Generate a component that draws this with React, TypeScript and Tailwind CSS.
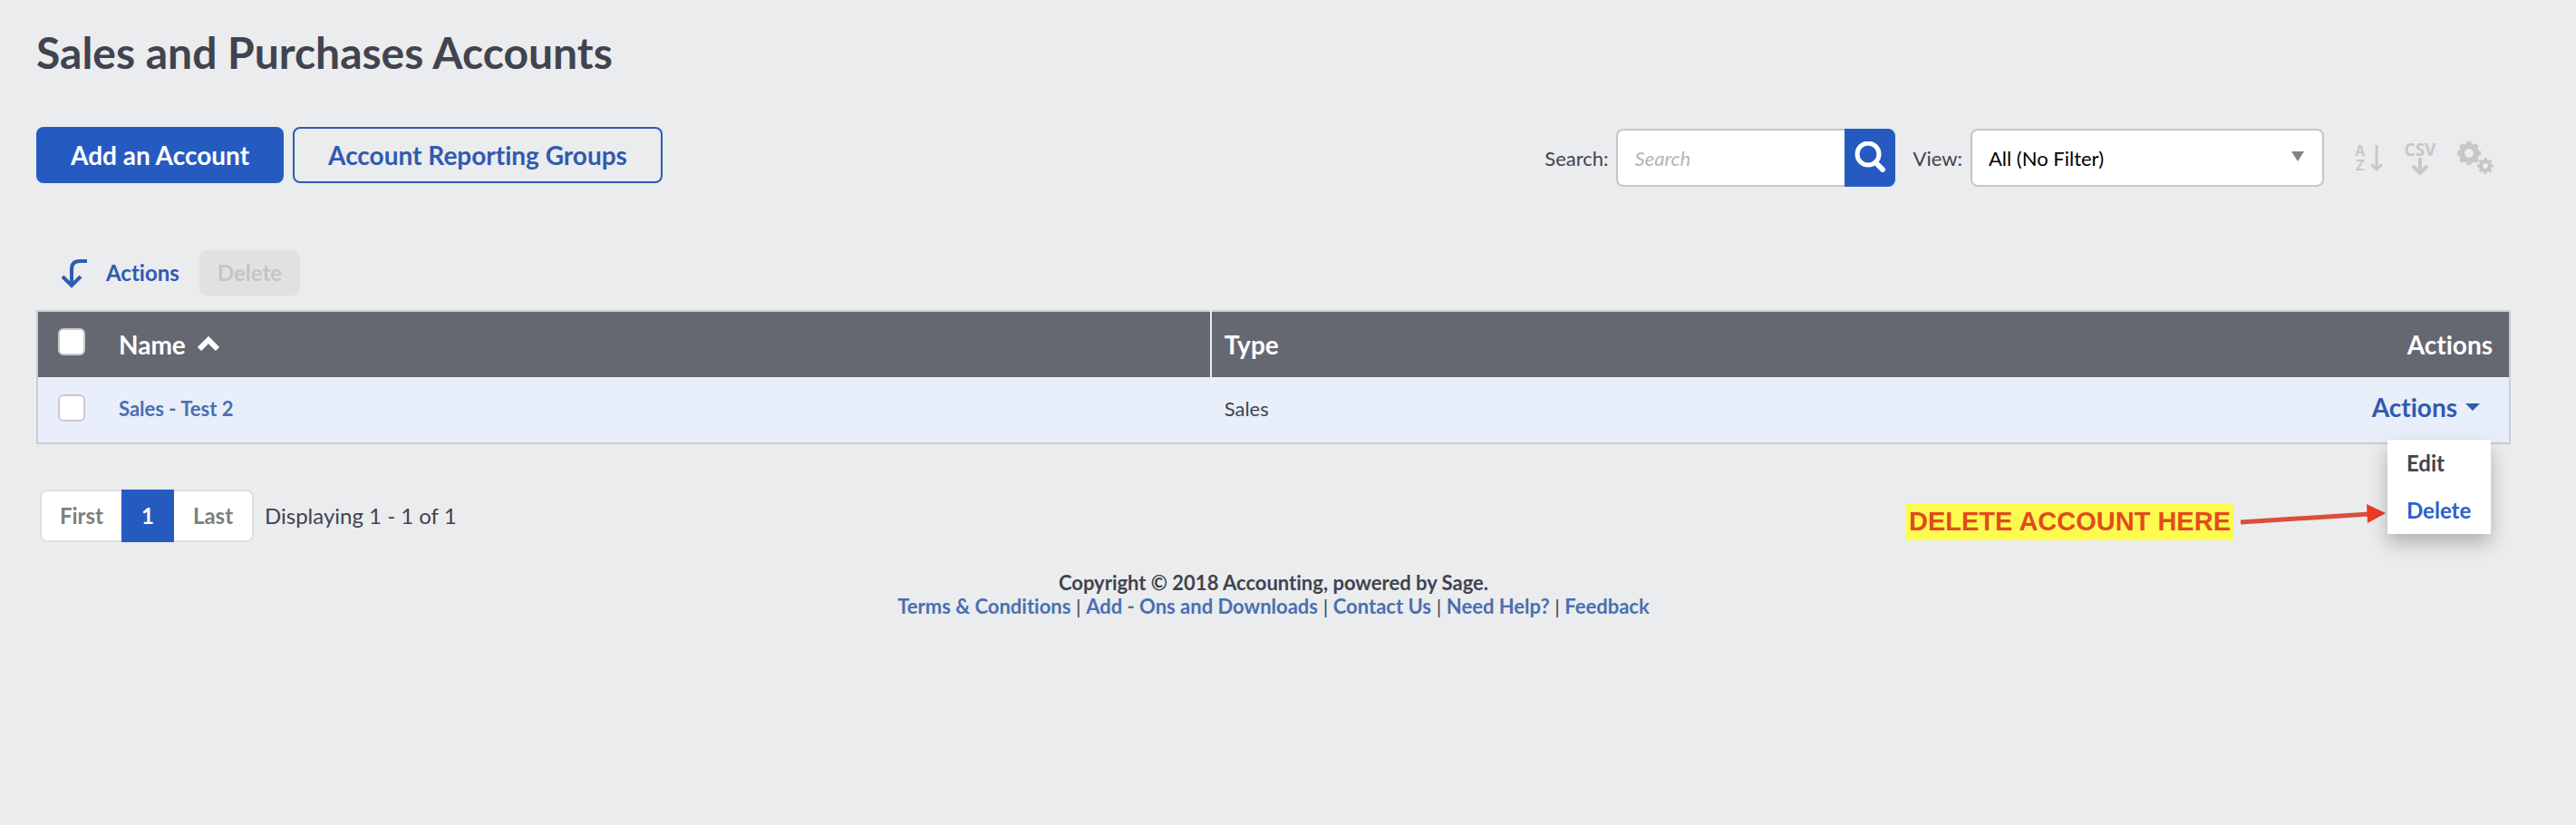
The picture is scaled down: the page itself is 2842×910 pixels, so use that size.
import { useState } from "react";

const footerLinks = ["Terms & Conditions", "Add - Ons and Downloads", "Contact Us", "Need Help?", "Feedback"];

const accounts = [{ id: 1, name: "Sales - Test 2", type: "Sales" }];

const SearchIcon = () => (
  <svg width="36" height="36" viewBox="0 0 36 36" fill="none" stroke="currentColor" strokeLinecap="round" aria-hidden="true">
    <circle cx="16" cy="14" r="12" strokeWidth="5" />
    <path d="M25 24l7 7" strokeWidth="6" />
  </svg>
);

const SortIcon = () => (
  <svg width="32" height="36" viewBox="0 0 32 36" aria-hidden="true">
    <text x="0" y="16" fontSize="16" fontWeight="700" fontFamily="Liberation Sans, sans-serif" fill="currentColor">A</text>
    <text x="1" y="32" fontSize="16" fontWeight="700" fontFamily="Liberation Sans, sans-serif" fill="currentColor">Z</text>
    <path d="M24 4v27M18 25l6 6 6-6" fill="none" stroke="currentColor" strokeWidth="3" />
  </svg>
);

const CsvIcon = () => (
  <svg width="40" height="44" viewBox="0 0 40 44" aria-hidden="true">
    <text x="20" y="20" textAnchor="middle" fontSize="19" fontWeight="700" fontFamily="Liberation Sans Narrow, Open Sans, sans-serif" fill="currentColor">CSV</text>
    <path d="M20 22v17M12 31l8 8 8-8" fill="none" stroke="currentColor" strokeWidth="4" />
  </svg>
);

const teeth = [0, 45, 90, 135, 180, 225, 270, 315];

const GearsIcon = () => (
  <svg width="42" height="40" viewBox="0 0 42 40" fill="none" stroke="currentColor" aria-hidden="true">
    <circle cx="14" cy="15" r="8" strokeWidth="6" />
    {teeth.map((angle) => (
      <path key={angle} d="M14 5V2" strokeWidth="5" transform={`rotate(${angle} 14 15)`} />
    ))}
    <circle cx="32" cy="29" r="5" strokeWidth="4" />
    {teeth.map((angle) => (
      <path key={angle} d="M32 23v-3" strokeWidth="3" transform={`rotate(${angle} 32 29)`} />
    ))}
  </svg>
);

const Checkbox = ({ label }: { label: string }) => (
  <input
    type="checkbox"
    aria-label={label}
    className="block size-[30px] appearance-none rounded-md border-2 border-[#c8cacd] bg-white checked:bg-[#255bc7]"
  />
);

const Toolbar = () => (
  <div className="flex items-start justify-between">
    <div className="flex gap-[10px] text-[28px] leading-8 font-bold">
      <button className="h-[62px] rounded-lg bg-[#255bc1] px-[38px] text-white">Add an Account</button>
      <button className="h-[62px] rounded-lg border-2 border-[#2f5bb0] px-[37px] text-[#2f5bb0]">
        Account Reporting Groups
      </button>
    </div>

    <div className="mt-0.5 mr-[18px] flex items-center text-[22px]">
      <label htmlFor="search" className="mr-2">Search:</label>
      <div className="flex h-16">
        <input
          id="search"
          type="text"
          placeholder="Search"
          className="w-[252px] rounded-l-lg border-2 border-r-0 border-[#c4c6c8] bg-white px-[19px] placeholder:text-[#b5b5b5] placeholder:italic"
        />
        <button aria-label="Run search" className="flex w-14 items-center justify-center rounded-r-lg bg-[#255bc1] text-white">
          <SearchIcon />
        </button>
      </div>
      <label htmlFor="view" className="mr-[9px] ml-5">View:</label>
      <div className="relative">
        <select id="view" className="h-16 w-[390px] appearance-none rounded-lg border-2 border-[#c4c6c8] bg-white px-[18px] text-black">
          <option>All (No Filter)</option>
        </select>
        <svg className="pointer-events-none absolute top-[25px] right-[22px]" width="14" height="11" viewBox="0 0 14 11" aria-hidden="true">
          <path d="M0 0h14L7 11z" fill="#808284" />
        </svg>
      </div>
      <div className="ml-[34px] flex items-center gap-5 text-[#c6c7c9]">
        <button aria-label="Sort"><SortIcon /></button>
        <button aria-label="Export to CSV"><CsvIcon /></button>
        <button aria-label="Settings"><GearsIcon /></button>
      </div>
    </div>
  </div>
);

const RowActions = () => {
  const [open, setOpen] = useState(true);

  return (
    <div className="relative inline-block">
      <button
        onClick={() => setOpen(!open)}
        className="flex items-center gap-[9px] pr-3 text-[28px] leading-8 font-bold text-[#2f5bb0]"
      >
        Actions
        <svg width="16" height="8" viewBox="0 0 16 8" aria-hidden="true">
          <path d="M0 0h16L8 8z" fill="currentColor" />
        </svg>
      </button>
      {open && (
        <div className="absolute top-[52px] right-0 flex h-[104px] w-[114px] flex-col bg-white text-left text-[24px] leading-[52px] font-bold shadow-[0_10px_20px_rgba(0,0,0,0.25)]">
          <a href="#edit" className="pl-[21px] text-[#41434f]">Edit</a>
          <a href="#delete" className="pl-[21px] text-[#2a62cc]">Delete</a>
        </div>
      )}
    </div>
  );
};

const AccountsTable = () => (
  <table className="mt-4 w-full border-collapse border-2 border-[#c9cdd4]">
    <thead>
      <tr className="h-[73px] bg-[#656871] text-left text-[28px] leading-8 text-white">
        <th className="w-[78px] pb-1.5 pl-[22px]"><Checkbox label="Select all accounts" /></th>
        <th className="w-[44.6%] pl-3 font-bold">
          <span className="flex items-center gap-3">
            Name
            <svg width="26" height="18" viewBox="0 0 26 18" fill="none" aria-hidden="true">
              <path d="M3 14L13 4l10 10" stroke="currentColor" strokeWidth="6" />
            </svg>
          </span>
        </th>
        <th className="border-l-2 border-[#eceded] pl-[14px] font-bold">Type</th>
        <th className="pr-[18px] text-right font-bold">Actions</th>
      </tr>
    </thead>
    <tbody>
      {accounts.map((account) => (
        <tr key={account.id} className="h-[73px] bg-[#e8eefa] text-[22px]">
          <td className="pb-1 pl-[22px]"><Checkbox label={`Select ${account.name}`} /></td>
          <td className="pb-1 pl-3">
            <a href="#account" className="font-bold text-[#4a6fb0]">{account.name}</a>
          </td>
          <td className="pb-1 pl-[15px]">{account.type}</td>
          <td className="pr-5 pb-1 text-right"><RowActions /></td>
        </tr>
      ))}
    </tbody>
  </table>
);

const Pagination = () => (
  <div className="mt-[50px] flex items-start justify-between pl-1">
    <div className="flex items-center text-[24px]">
      <nav aria-label="Pages" className="flex h-[58px] font-bold text-[#7d7f80]">
        <button className="w-[90px] rounded-l-lg border-2 border-r-0 border-[#dedfe1] bg-white">First</button>
        <button aria-current="page" className="w-[58px] bg-[#255bc1] text-white">1</button>
        <button className="w-[88px] rounded-r-lg border-2 border-l-0 border-[#dedfe1] bg-white">Last</button>
      </nav>
      <span className="ml-3">Displaying 1 - 1 of 1</span>
    </div>

    <div className="mt-[15px] mr-[138px] flex items-start gap-2">
      <strong className="bg-[#fdfb50] px-[3px] font-['Liberation_Sans',sans-serif] text-[29px] leading-[41px] text-[#e34a1f]">
        DELETE ACCOUNT HERE
      </strong>
      <svg width="160" height="30" viewBox="0 0 160 30" aria-hidden="true">
        <path d="M0 21l142-9" stroke="#db4e39" strokeWidth="5" />
        <path d="M139 1l21 10-20 11z" fill="#ee3c26" />
      </svg>
    </div>
  </div>
);

const App = () => (
  <main className="min-h-screen bg-[#eaecee] pt-7 pr-[72px] pl-10 font-[Lato,sans-serif] text-[#41434f] [font-variant-ligatures:none]">
    <h1 className="mb-[52px] text-[48px] leading-[60px] font-bold">Sales and Purchases Accounts</h1>
    <Toolbar />

    <div className="mt-[70px] flex items-center pl-[27px] text-[24px] font-bold">
      <svg width="30" height="34" viewBox="0 0 30 34" fill="none" stroke="#2f5bb0" strokeWidth="4" aria-hidden="true">
        <path d="M29 4H21Q12 4 12 13V30M2 21l10 10 10-10" />
      </svg>
      <span className="ml-5 text-[#2f5bb0]">Actions</span>
      <button disabled className="ml-[22px] h-[50px] rounded-lg bg-[#e0e1e2] px-5 text-[#c3c5c7]">Delete</button>
    </div>

    <AccountsTable />
    <Pagination />

    <footer className="mt-8 text-center text-[22px] leading-[26px]">
      <p className="font-bold">Copyright © 2018 Accounting, powered by Sage.</p>
      <p>
        {footerLinks.map((link, index) => (
          <span key={link}>
            {index > 0 && " | "}
            <a href="#footer" className="font-bold text-[#4a6fb0]">{link}</a>
          </span>
        ))}
      </p>
    </footer>
  </main>
);

export default App;
